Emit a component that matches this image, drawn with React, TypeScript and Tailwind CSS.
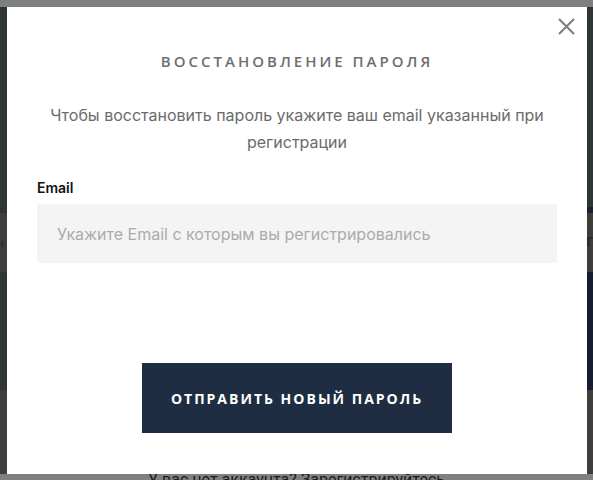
import React from "react";

const PasswordRecovery: React.FC = () => {
	return (
		<div className="absolute left-[7px] top-[7px] z-10 h-[467px] w-[580px] bg-white px-[30px] pt-[44px] font-['Inter',sans-serif]">
			{/* Close */}
			<button className="absolute right-[12px] top-[11px] flex h-[17px] w-[17px] items-center justify-center text-[#7d7d7d]">
				<svg width="17" height="17" viewBox="0 0 17 17" fill="none">
					<path d="M1 1L16 16M16 1L1 16" stroke="currentColor" strokeWidth="2" />
				</svg>
			</button>

			<h2 className="text-center font-['Open_Sans',sans-serif] text-[15px] font-semibold uppercase leading-[20px] tracking-[3px] text-[#6e6e6e]">
				Восстановление пароля
			</h2>

			<p className="mt-[31px] text-center text-[16px] leading-[27px] text-[#6b6b6b]">
				Чтобы восстановить пароль укажите ваш email указанный при
				<br />
				регистрации
			</p>

			<label className="mt-[22px] block text-[14px] font-semibold leading-[20px] text-[#111]">
				Email
			</label>
			<input
				type="email"
				placeholder="Укажите Email с которым вы регистрировались"
				className="mt-[6px] h-[59px] w-full bg-[#f4f4f4] px-[20px] text-[16px] text-[#333] outline-none placeholder:text-[#ababab]"
			/>

			<div className="mt-[100px] flex justify-center">
				<button className="h-[70px] w-[310px] bg-[#1f2d42] font-['Open_Sans',sans-serif] text-[14px] font-bold uppercase tracking-[2px] text-white">
					Отправить новый пароль
				</button>
			</div>
		</div>
	);
};

const App: React.FC = () => {
	return (
		<div className="relative h-[480px] w-[593px] overflow-hidden bg-[#2d3537]">
			{/* dimmed page behind the modal */}
			<div className="flex h-full flex-col">
				<div className="h-[7px] bg-[#7f7f7f]" />
				<div className="flex h-[206px] justify-between">
					<div className="w-[7px]" />
					<div className="flex w-[6px] flex-col justify-end">
						<div className="h-[6px] bg-[#182231]" />
					</div>
				</div>
				<div className="flex h-[59px] items-center justify-between bg-[#3e3d3c] text-[#2a2a2a]">
					<span className="text-[14px]">‹</span>
					<span className="font-['Liberation_Sans',sans-serif] text-[15px] font-bold">T</span>
				</div>
				<div className="flex h-[118px] justify-end">
					<div className="w-[6px] bg-[#141e2c]" />
				</div>
				<div className="h-[84px] bg-[#3f3e3d]" />
				<div className="h-[6px] bg-[#808080]">
					<p className="-mt-[6px] text-center font-['Roboto',sans-serif] text-[16px] leading-[24px] text-[#1c1c1c]">
						У вас нет аккаунта? Зарегистрируйтесь
					</p>
				</div>
			</div>

			<PasswordRecovery />
		</div>
	);
};

export default App;
